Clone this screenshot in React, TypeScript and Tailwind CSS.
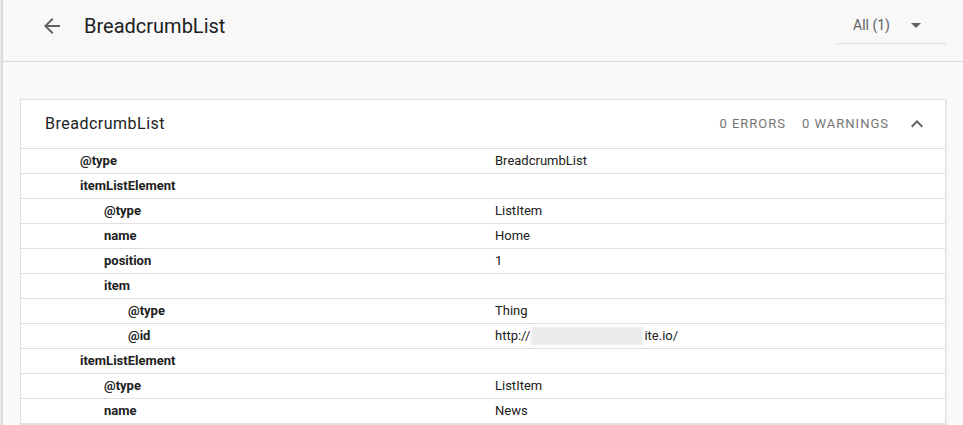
import React from 'react';

interface Row { label: string; value?: string; depth: number; masked?: boolean; }

const rows: Row[] = [
  { label: '@type', value: 'BreadcrumbList', depth: 0 },
  { label: 'itemListElement', depth: 0 },
  { label: '@type', value: 'ListItem', depth: 1 },
  { label: 'name', value: 'Home', depth: 1 },
  { label: 'position', value: '1', depth: 1 },
  { label: 'item', depth: 1 },
  { label: '@type', value: 'Thing', depth: 2 },
  { label: '@id', value: 'http://', depth: 2, masked: true },
  { label: 'itemListElement', depth: 0 },
  { label: '@type', value: 'ListItem', depth: 1 },
  { label: 'name', value: 'News', depth: 1 },
];

const indent = ['pl-[59px]', 'pl-[83px]', 'pl-[107px]'];

export default function App() {
  return (
    <div className="flex h-[425px] overflow-hidden bg-[#fafafa] font-['Roboto',sans-serif]">
      {/* left edge strip */}
      <div className="w-[3px] shrink-0 border-r-2 border-[#dcdcdc] bg-[#ececec]" />

      <div className="flex min-w-0 flex-1 flex-col">
        {/* Top bar */}
        <div className="flex h-[62px] shrink-0 items-start border-b border-[#dadada] bg-[#f8f8f8] pl-[37px] pr-[17px] pt-[12px]">
          <svg width="24" height="24" viewBox="0 0 24 24" className="mt-[2px] text-[#5f6368]">
            <path d="M20 11H7.83l5.59-5.59L12 4l-8 8 8 8 1.41-1.41L7.83 13H20v-2z" fill="currentColor" />
          </svg>
          <h1 className="ml-5 text-[20px] leading-[28px] text-[#212121]">BreadcrumbList</h1>
          <div className="ml-auto mt-[-4px] flex h-[36px] w-[109px] items-start border-b border-[#dcdcdc] pl-4 pt-[7px]">
            <span className="text-[14px] leading-[20px] text-[#616161]">All (1)</span>
            <svg width="10" height="5" viewBox="0 0 10 5" className="ml-auto mr-[25px] mt-[8px]">
              <path d="M0 0h10L5 5z" fill="#616161" />
            </svg>
          </div>
        </div>

        {/* Result card */}
        <div className="px-[17px] pt-[37px]">
          <div className="border border-[#e0e0e0] bg-white shadow-[1px_1px_2px_rgba(0,0,0,0.06)]">
            <div className="flex h-[49px] items-center border-b border-[#e0e0e0] pl-6 pr-[22px]">
              <span className="text-[16px] tracking-[0.5px] text-[#212121]">BreadcrumbList</span>
              <span className="ml-auto text-[13px] tracking-[1px] text-[#757575]">0 ERRORS</span>
              <span className="ml-[16px] text-[13px] tracking-[1px] text-[#757575]">0 WARNINGS</span>
              <svg width="12" height="8" viewBox="0 0 12 8" className="ml-[22px]">
                <path d="M1.4 7.4L6 2.8l4.6 4.6L12 6 6 0 0 6z" fill="#616161" />
              </svg>
            </div>
            {rows.map((r, i) => (
              <div key={i} className="grid h-[25px] grid-cols-[474px_1fr] items-center border-b border-[#e0e0e0] text-[13px] text-[#212121]">
                <span className={`${indent[r.depth]} font-bold`}>{r.label}</span>
                <span className="flex items-center">
                  {r.value}
                  {r.masked && (
                    <>
                      <span className="mx-[1px] inline-block h-[18px] w-[112px] bg-[#ebebeb] blur-[1px]" />
                      <span>ite.io/</span>
                    </>
                  )}
                </span>
              </div>
            ))}
          </div>
        </div>
      </div>
    </div>
  );
}
